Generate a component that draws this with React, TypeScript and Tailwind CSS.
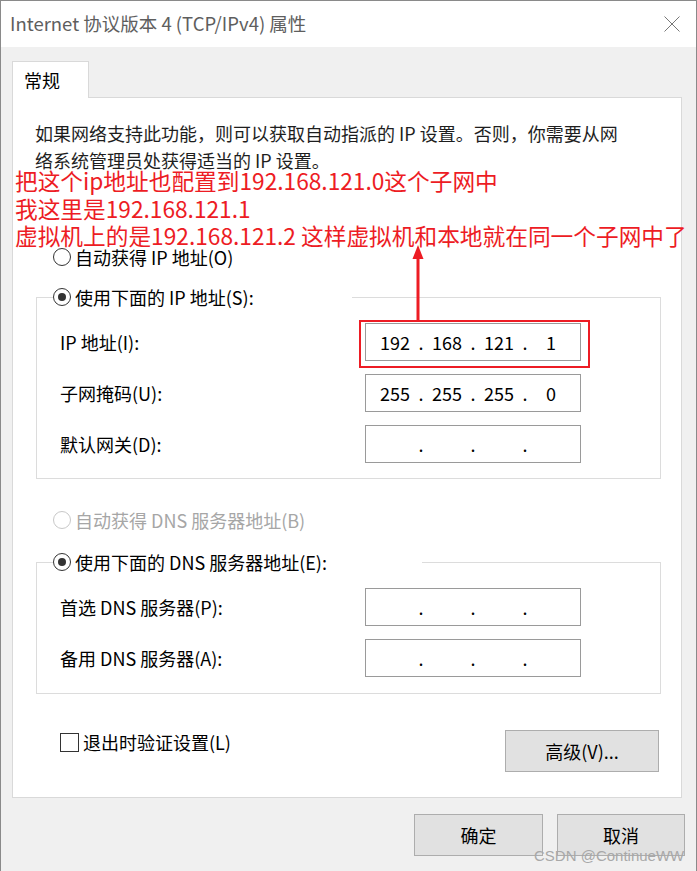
import clsx from "clsx";

const FONT = "font-['Noto_Sans_CJK_SC','Noto_Sans',sans-serif]";

function Radio({ label, checked, disabled }: { label: string; checked?: boolean; disabled?: boolean }) {
  return (
    <div className="flex h-[20px] items-center">
      <span
        className={clsx(
          "flex h-[18px] w-[18px] items-center justify-center rounded-full border bg-white",
          disabled ? "border-[#c8c8c8]" : "border-[#333333]",
        )}
      >
        {checked && <span className="h-[8px] w-[8px] rounded-full bg-[#333333]" />}
      </span>
      <span className={clsx("ml-[4px] text-[18px] leading-[20px]", disabled ? "text-[#a6a6a6]" : "text-black")}>
        {label}
      </span>
    </div>
  );
}

function IpBox({ octets = ["", "", "", ""] }: { octets?: string[] }) {
  return (
    <div className="flex h-[38px] w-[216px] items-center border border-[#9a9a9a] bg-white pl-[9px] text-[18px] leading-none text-black">
      {octets.map((o, i) => (
        <div key={i} className="flex items-center">
          <span className="w-[40px] text-center">{o}</span>
          {i < 3 && <span className="w-[12px] text-center">.</span>}
        </div>
      ))}
    </div>
  );
}

function FieldRow({ label, octets }: { label: string; octets?: string[] }) {
  return (
    <div className="flex h-[38px] items-center">
      <span className="w-[305px] text-[18px] text-black">{label}</span>
      <IpBox octets={octets} />
    </div>
  );
}

function Group({ legend, legendWidth, children, pb }: { legend: string; legendWidth: string; children: React.ReactNode; pb: string }) {
  return (
    <fieldset className={clsx("border border-[#dcdcdc] px-[23px] pt-[16px]", pb)}>
      {/* legend sits at the padding edge, pull it back towards the frame */}
      <legend className={clsx("-ml-[7px] bg-white", legendWidth)}>
        <Radio label={legend} checked />
      </legend>
      <div className="flex flex-col gap-[13px]">{children}</div>
    </fieldset>
  );
}

function WinButton({ children, w }: { children: React.ReactNode; w: string }) {
  return (
    <button className={clsx("flex h-[42px] items-center justify-center border border-[#adadad] bg-[#e1e1e1] text-[18px] text-black", w)}>
      {children}
    </button>
  );
}

export default function App() {
  return (
    <div className={clsx("relative h-[871px] w-[697px] overflow-hidden border-x border-t border-[#8a8a8a] bg-[#f0f0f0]", FONT)}>
      {/* title bar */}
      <div className="flex h-[46px] items-center justify-between bg-white pl-[9px] pr-[16px]">
        <span className="text-[18.5px] text-[#5e5e5e]">Internet 协议版本 4 (TCP/IPv4) 属性</span>
        <svg width="16" height="16" viewBox="0 0 16 16" className="text-[#777]">
          <path d="M0.5 0.5 L15.5 15.5 M15.5 0.5 L0.5 15.5" stroke="currentColor" strokeWidth="1" fill="none" />
        </svg>
      </div>

      {/* tab */}
      <div className="relative z-10 ml-[11px] mt-[14px] -mb-px flex h-[37px] w-[77px] items-center border-x border-t border-[#d9d9d9] bg-white pl-[11px] text-[18px] text-black">
        常规
      </div>

      {/* tab panel */}
      <div className="ml-[11px] w-[670px] border border-[#d9d9d9] bg-white pb-[25px] pl-[23px] pr-[20px] pt-[22px]">
        <p className="-ml-px text-[18px] leading-[27px] text-[#1e1e1e]">
          如果网络支持此功能，则可以获取自动指派的 IP 设置。否则，你需要从网
          <br />
          络系统管理员处获得适当的 IP 设置。
        </p>

        <div className="ml-[17px] mt-[73px]">
          <Radio label="自动获得 IP 地址(O)" />
        </div>

        <div className="mt-[20px]">
          <Group legend="使用下面的 IP 地址(S):" legendWidth="w-[299px]" pb="pb-[15px]">
            <FieldRow label="IP 地址(I):" octets={["192", "168", "121", "1"]} />
            <FieldRow label="子网掩码(U):" octets={["255", "255", "255", "0"]} />
            <FieldRow label="默认网关(D):" />
          </Group>
        </div>

        <div className="ml-[17px] mt-[31px]">
          <Radio label="自动获得 DNS 服务器地址(B)" disabled />
        </div>

        <div className="mt-[22px]">
          <Group legend="使用下面的 DNS 服务器地址(E):" legendWidth="w-[369px]" pb="pb-[16px]">
            <FieldRow label="首选 DNS 服务器(P):" />
            <FieldRow label="备用 DNS 服务器(A):" />
          </Group>
        </div>

        <div className="mt-[36px] flex items-start justify-between">
          <div className="ml-[24px] mt-[3px] flex items-center">
            <span className="h-[19px] w-[19px] border border-[#333333] bg-white" />
            <span className="ml-[4px] text-[18px] leading-[19px] text-black">退出时验证设置(L)</span>
          </div>
          <div className="mr-[2px]">
            <WinButton w="w-[154px]">高级(V)...</WinButton>
          </div>
        </div>
      </div>

      {/* dialog buttons */}
      <div className="mr-[11px] mt-[16px] flex justify-end gap-[14px]">
        <WinButton w="w-[129px]">确定</WinButton>
        <WinButton w="w-[128px]">取消</WinButton>
      </div>

      {/* annotation overlay */}
      <div className="absolute left-[14px] top-[166px] whitespace-nowrap text-[22.7px] leading-[27.5px] text-[#ed1c24]">
        <div>把这个ip地址也配置到192.168.121.0这个子网中</div>
        <div>我这里是192.168.121.1</div>
        <div>虚拟机上的是192.168.121.2 这样虚拟机和本地就在同一个子网中了</div>
      </div>
      <svg className="absolute left-[410px] top-[244px]" width="14" height="76" viewBox="0 0 14 76">
        <path d="M7 12 L7 76" stroke="#ed1c24" strokeWidth="3" />
        <path d="M7 0 L12.5 14 L1.5 14 Z" fill="#ed1c24" />
      </svg>
      <div className="absolute left-[358px] top-[319px] h-[48px] w-[231px] border-2 border-[#ed1c24]" />

      {/* watermark */}
      <div className="absolute left-[533px] top-[846px] font-['Liberation_Sans',sans-serif] text-[15px] leading-[18px] text-[#a8a8a8]">
        CSDN @ContinueWW
      </div>
    </div>
  );
}
